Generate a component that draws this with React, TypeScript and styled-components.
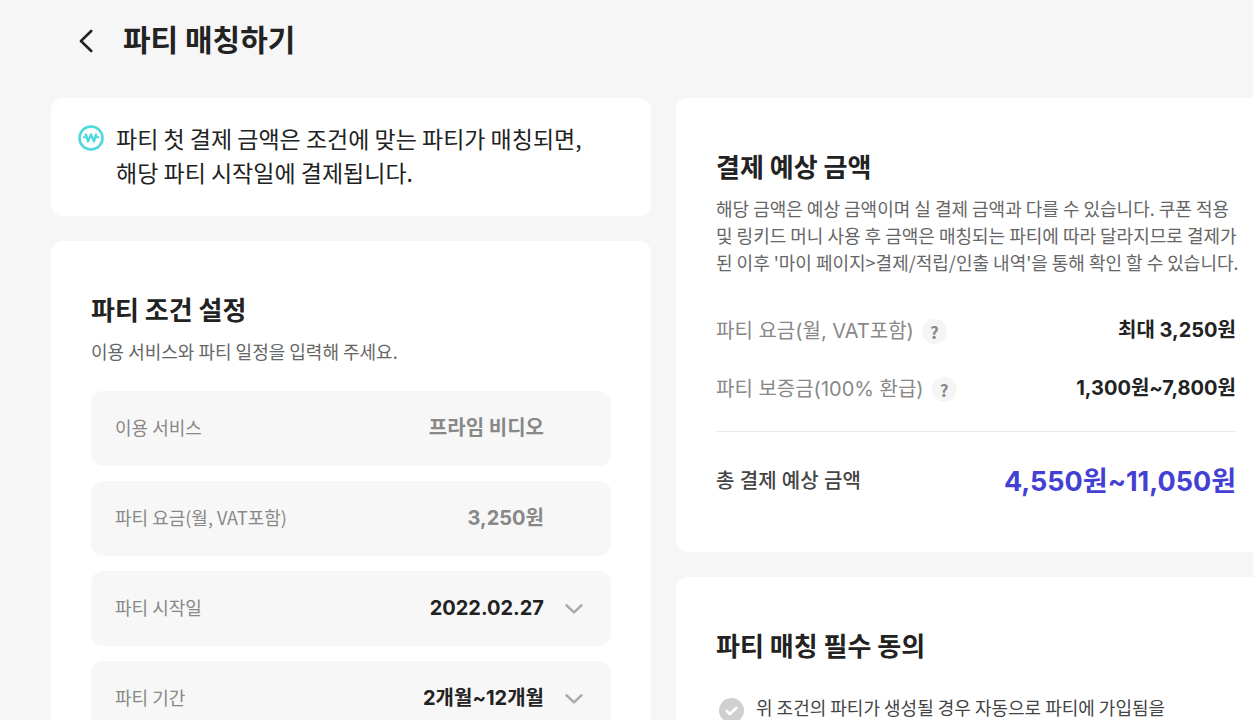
import React from "react";
import styled, { createGlobalStyle } from "styled-components";

const hangul = `"Noto Sans CJK KR", "Noto Sans", sans-serif`;
const numeric = `Inter, "Noto Sans CJK KR", sans-serif`;

const GlobalStyle = createGlobalStyle`
  *, *::before, *::after { box-sizing: border-box; }
  body {
    margin: 0;
    background: #f6f6f6;
    color: #222;
    font-family: ${hangul};
  }
  h1, h2, p { margin: 0; }
  button, input, select { font: inherit; color: inherit; }
`;

const Page = styled.div`
  min-height: 100vh;
  padding: 0 51px 50px;
`;

const Header = styled.header`
  display: flex;
  align-items: center;
  gap: 23px;
  height: 82px;
  margin-bottom: 16px;
  padding-left: 21px;
`;

const BackButton = styled.button`
  display: grid;
  place-items: center;
  width: 28px;
  height: 28px;
  padding: 0;
  border: 0;
  background: none;
  cursor: pointer;
`;

const Title = styled.h1`
  padding-bottom: 6px;
  font-size: 30px;
  line-height: 44px;
  font-weight: 700;
`;

const Columns = styled.main`
  display: grid;
  grid-template-columns: repeat(2, minmax(600px, 1fr));
  align-items: start;
  gap: 25px;
`;

const Column = styled.div`
  display: flex;
  flex-direction: column;
  gap: 25px;
`;

const Card = styled.section`
  padding: 50px 40px;
  border-radius: 12px;
  background: #fff;
`;

const Notice = styled.section`
  display: flex;
  align-items: flex-start;
  gap: 12px;
  padding: 23px 27px 27px;
  border-radius: 12px;
  background: #fff;
  font-size: 23px;
  line-height: 34px;

  svg {
    flex: none;
    margin-top: 4px;
  }
`;

const CardTitle = styled.h2`
  font-size: 26px;
  line-height: 35px;
  font-weight: 700;
`;

const Description = styled.p`
  margin-top: 12px;
  color: #666;
  font-size: 18px;
  line-height: 27px;
  white-space: nowrap;
`;

const Fields = styled.div`
  display: flex;
  flex-direction: column;
  gap: 15px;
  margin-top: 26px;
`;

const FieldRow = styled.div`
  display: grid;
  grid-template-columns: auto 1fr 18px;
  align-items: center;
  column-gap: 21px;
  height: 75px;
  padding: 0 28px 0 24px;
  border-radius: 12px;
  background: #f7f7f7;

  label {
    grid-area: 1 / 1;
    padding-bottom: 2px;
    color: #888;
    font-size: 18px;
    line-height: 27px;
  }

  svg {
    grid-area: 1 / 3;
    pointer-events: none;
  }
`;

const ReadOnlyValue = styled.input`
  grid-area: 1 / 2;
  width: 100%;
  min-width: 0;
  padding: 0 0 2px;
  border: 0;
  background: none;
  color: #888;
  font-family: ${numeric};
  font-size: 20px;
  font-weight: 700;
  line-height: 30px;
  text-align: right;
`;

const Picker = styled.select`
  grid-area: 1 / 2 / 2 / 4;
  width: 100%;
  padding: 0 39px 2px 0;
  border: 0;
  appearance: none;
  background: none;
  font-family: ${numeric};
  font-size: 20px;
  font-weight: 700;
  line-height: 30px;
  text-align-last: right;
  cursor: pointer;
`;

const Amounts = styled.dl`
  margin: 26px 0 0;
`;

const AmountRow = styled.div`
  display: flex;
  align-items: center;
  justify-content: space-between;
  height: 58px;

  dt {
    display: flex;
    align-items: center;
    gap: 8px;
    color: #888;
    font-family: ${numeric};
    font-size: 20px;
    line-height: 30px;
  }

  dd {
    margin: 0;
    padding-bottom: 2px;
    font-family: ${numeric};
    font-size: 20px;
    line-height: 30px;
    font-weight: 700;
  }
`;

const TotalRow = styled(AmountRow)`
  height: 99px;
  margin: 13px 0 -28px;
  border-top: 1px solid #ebebeb;

  dt {
    color: #444;
    font-weight: 500;
  }

  dd {
    padding-bottom: 0;
    color: #4340d3;
    font-size: 27px;
    line-height: 39px;
  }
`;

const HelpButton = styled.button`
  width: 25px;
  height: 25px;
  padding: 0;
  border: 0;
  border-radius: 50%;
  background: #f5f5f5;
  color: #888;
  font-family: ${hangul};
  font-size: 17px;
  font-weight: 700;
  line-height: 25px;
  cursor: pointer;
`;

const Consent = styled.label`
  display: flex;
  align-items: flex-start;
  gap: 12px;
  margin-top: 32px;
  padding-left: 3px;
  color: #444;
  font-size: 18px;
  line-height: 27px;
  white-space: nowrap;
  cursor: pointer;
`;

const Tick = styled.span`
  display: grid;
  flex: none;
  margin-top: 4px;

  input, svg { grid-area: 1 / 1; }
  svg { place-self: center; pointer-events: none; }
`;

const TickInput = styled.input`
  width: 25px;
  height: 25px;
  margin: 0;
  appearance: none;
  border-radius: 50%;
  background: #d0d0d0;
  cursor: pointer;

  &:checked { background: #4340d3; }
`;

const WonIcon = () => (
  <svg width="26" height="26" viewBox="0 0 26 26" fill="none" stroke="#4fd9de" aria-hidden="true">
    <circle cx="13" cy="13" r="11.5" strokeWidth="2.6" />
    <path d="M7.6 8.6l2.5 7.8L13 9.4l2.9 7L18.4 8.6" strokeWidth="2.4" strokeLinejoin="round" />
    <path d="M5 12.2h4.4M16.6 12.2H21" strokeWidth="2" />
  </svg>
);

const ChevronDown = () => (
  <svg width="18" height="10" viewBox="0 0 18 10" fill="none" stroke="#aaa" strokeWidth="2.6" strokeLinecap="round" strokeLinejoin="round" aria-hidden="true">
    <path d="M1.6 1.4L9 8.4l7.4-7" />
  </svg>
);

const fixedFields = [
  { id: "service", label: "이용 서비스", value: "프라임 비디오" },
  { id: "fee", label: "파티 요금(월, VAT포함)", value: "3,250원" },
];

const pickers = [
  { id: "start", label: "파티 시작일", value: "2022.02.27" },
  { id: "period", label: "파티 기간", value: "2개월~12개월" },
];

const amounts = [
  { label: "파티 요금(월, VAT포함)", value: "최대 3,250원" },
  { label: "파티 보증금(100% 환급)", value: "1,300원~7,800원" },
];

export default function App() {
  return (
    <Page>
      <GlobalStyle />
      <Header>
        <BackButton type="button" aria-label="뒤로">
          <svg width="14" height="24" viewBox="0 0 14 24" fill="none" stroke="#222" strokeWidth="2.6" strokeLinecap="round" strokeLinejoin="round">
            <path d="M12.2 2L2 12l10.2 10" />
          </svg>
        </BackButton>
        <Title>파티 매칭하기</Title>
      </Header>
      <Columns>
        <Column>
          <Notice>
            <WonIcon />
            <p>
              파티 첫 결제 금액은 조건에 맞는 파티가 매칭되면,
              <br />
              해당 파티 시작일에 결제됩니다.
            </p>
          </Notice>
          <Card>
            <CardTitle>파티 조건 설정</CardTitle>
            <Description>이용 서비스와 파티 일정을 입력해 주세요.</Description>
            <Fields>
              {fixedFields.map((f) => (
                <FieldRow key={f.id}>
                  <label htmlFor={f.id}>{f.label}</label>
                  <ReadOnlyValue id={f.id} value={f.value} readOnly />
                </FieldRow>
              ))}
              {pickers.map((p) => (
                <FieldRow key={p.id}>
                  <label htmlFor={p.id}>{p.label}</label>
                  <Picker id={p.id} defaultValue={p.value}>
                    <option>{p.value}</option>
                  </Picker>
                  <ChevronDown />
                </FieldRow>
              ))}
            </Fields>
          </Card>
        </Column>
        <Column>
          <Card>
            <CardTitle>결제 예상 금액</CardTitle>
            <Description>
              해당 금액은 예상 금액이며 실 결제 금액과 다를 수 있습니다. 쿠폰 적용
              <br />
              및 링키드 머니 사용 후 금액은 매칭되는 파티에 따라 달라지므로 결제가
              <br />
              된 이후 '마이 페이지&gt;결제/적립/인출 내역'을 통해 확인 할 수 있습니다.
            </Description>
            <Amounts>
              {amounts.map((a) => (
                <AmountRow key={a.label}>
                  <dt>
                    {a.label}
                    <HelpButton type="button">?</HelpButton>
                  </dt>
                  <dd>{a.value}</dd>
                </AmountRow>
              ))}
              <TotalRow>
                <dt>총 결제 예상 금액</dt>
                <dd>4,550원~11,050원</dd>
              </TotalRow>
            </Amounts>
          </Card>
          <Card>
            <CardTitle>파티 매칭 필수 동의</CardTitle>
            <Consent>
              <Tick>
                <TickInput type="checkbox" />
                <svg width="13" height="10" viewBox="0 0 13 10" fill="none" stroke="#fff" strokeWidth="2.6" strokeLinecap="round" strokeLinejoin="round" aria-hidden="true">
                  <path d="M1.8 5l3.2 3L11.2 2" />
                </svg>
              </Tick>
              <span>위 조건의 파티가 생성될 경우 자동으로 파티에 가입됨을</span>
            </Consent>
          </Card>
        </Column>
      </Columns>
    </Page>
  );
}
